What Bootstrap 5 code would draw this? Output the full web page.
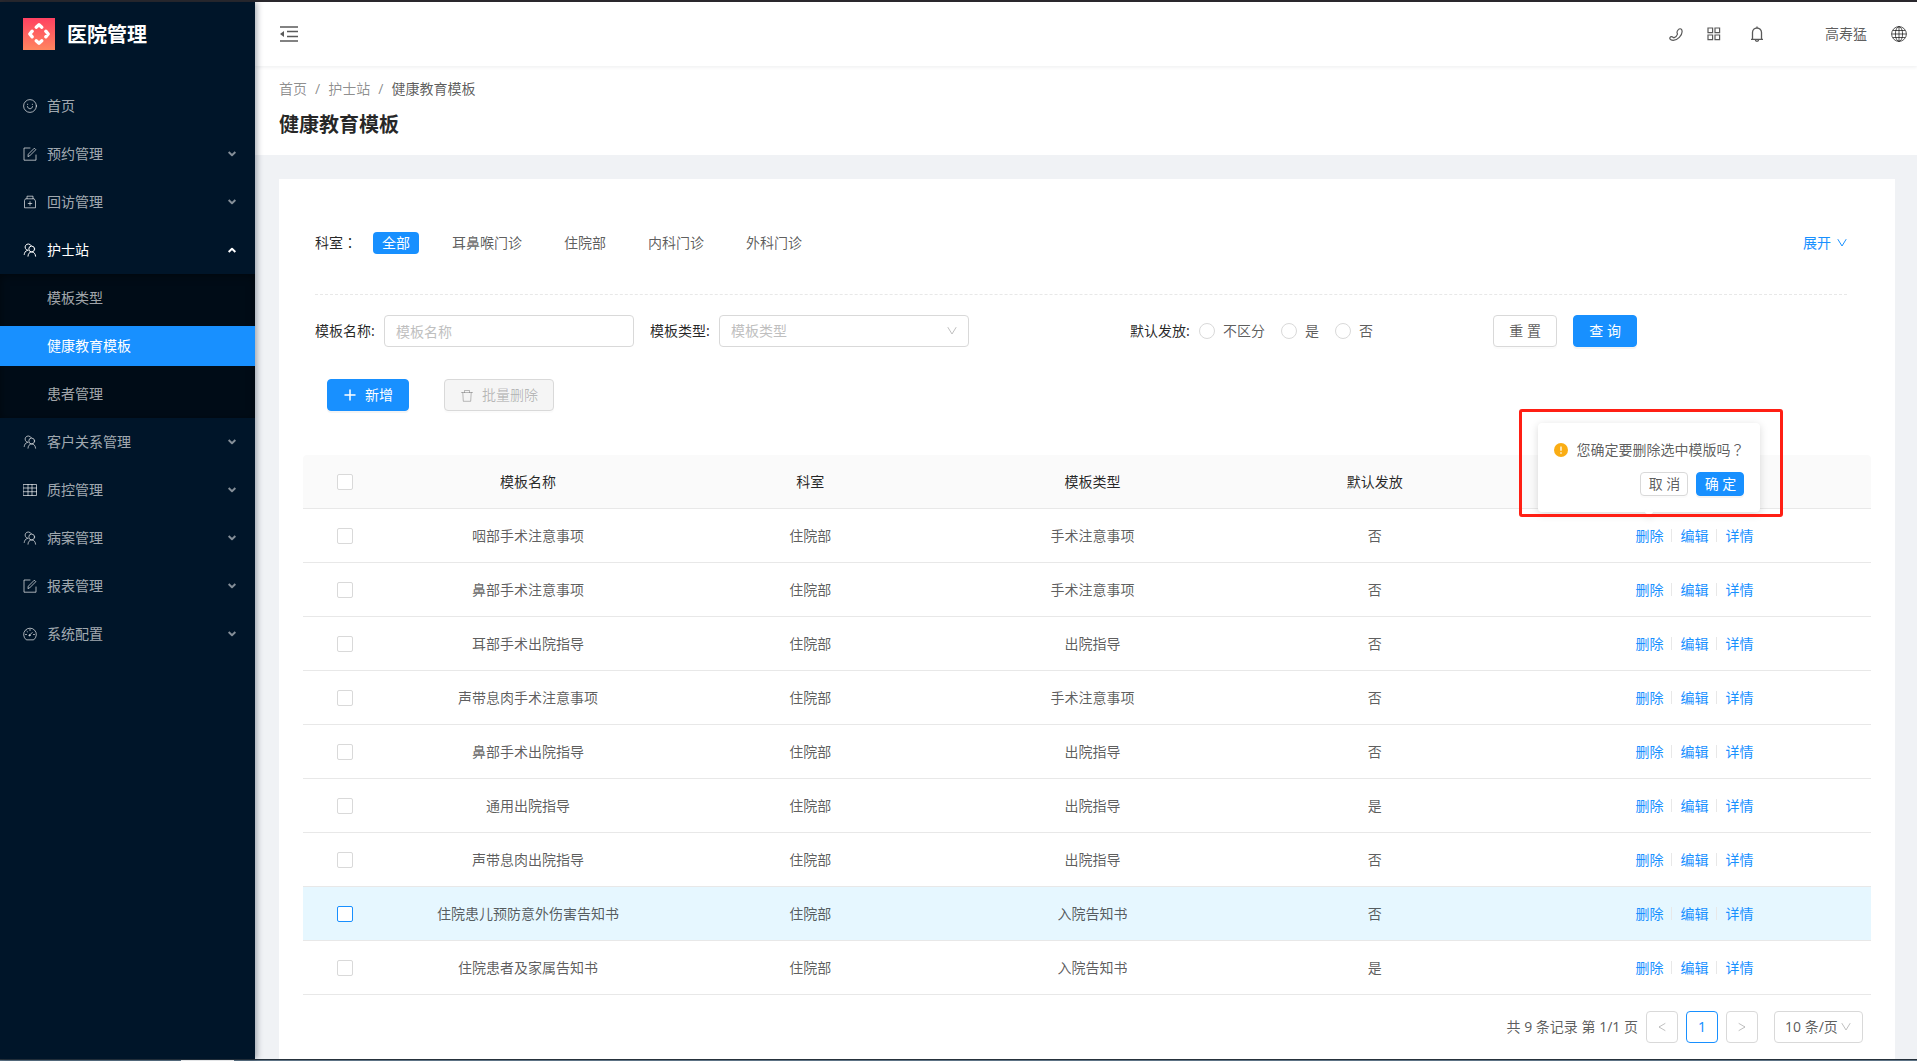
<!DOCTYPE html>
<html lang="zh-CN">
<head>
<meta charset="utf-8">
<meta name="viewport" content="width=device-width, initial-scale=1">
<title>健康教育模板 - 医院管理</title>
<link href="https://cdn.jsdelivr.net/npm/bootstrap@5.3.0/dist/css/bootstrap.min.css" rel="stylesheet">
<style>
:root{--blue:#1890ff;--navy:#001529;--line:#e8e8e8;--edge:#d9d9d9;--ink:rgba(0,0,0,.85);--txt:rgba(0,0,0,.65);--muted:rgba(0,0,0,.45)}
body{font-family:"Noto Sans","Noto Sans CJK SC",sans-serif;font-size:14px;line-height:22px;color:var(--txt);background:#f0f2f5}
a{color:inherit;text-decoration:none}
svg{display:block;flex:none}
.ico{width:14px;height:14px;fill:none;stroke:currentColor;stroke-width:1;stroke-linecap:round;stroke-linejoin:round}
.ico.small-ico{width:10px;height:10px}
.mid-punct{font-family:"Noto Sans CJK TC",sans-serif;font-feature-settings:"locl" 0;line-height:1}
.top-strip{height:2px;background:#2b292e}
.bottom-strip{height:2px;background:linear-gradient(90deg,#5d7385 0 181px,#fff 181px 234px,#5d7385 234px);border-top:1px solid #26313b}
.side{width:255px;background:var(--navy);box-shadow:2px 0 6px rgba(0,21,41,.35);z-index:5;color:rgba(255,255,255,.65)}
.brand{height:64px;padding-left:23px;gap:12px;color:#fff}
.brand h1{font-size:20px;line-height:32px;font-weight:700;margin:0;padding-top:2px}
.side li{display:flow-root}
.menu-link{height:40px;margin:4px 0;padding:0 19px 0 23px;gap:10px}
.menu-link:hover,.menu-link.open{color:#fff}
.menu-link .caret{width:8px;height:6px;margin-left:auto;stroke-width:2;stroke-linecap:butt}
.menu-link:not(.open) .caret{opacity:.8}
.submenu{background:#000c17;box-shadow:inset 0 2px 8px rgba(0,0,0,.45)}
.submenu .menu-link{padding-left:47px}
.submenu .menu-link.active{background:var(--blue);color:#fff}
.main-col{min-width:0}
.app-head{height:64px;background:#fff;box-shadow:0 1px 4px rgba(0,21,41,.08);padding:0 10px 0 25px;z-index:2}
.head-btn{padding:0;border:0;background:none;color:var(--txt)}
.head-tools{gap:24px}
.user-name{margin-left:36px}
.page-head{background:#fff;padding:12px 24px 14px}
.page-head .breadcrumb{margin:0 0 9px;--bs-breadcrumb-divider-color:var(--muted);--bs-breadcrumb-item-active-color:var(--txt);color:var(--muted)}
.page-head h2{font-size:20px;line-height:32px;font-weight:700;color:var(--ink);margin:0}
.panel{background:#fff;margin:24px 22px 0 24px;padding:48px 24px 16px}
.filters{margin:0 24px 0 12px}
.caption{color:var(--ink);white-space:nowrap}
.dept-row{padding:5px 0 40px;border-bottom:1px dashed var(--line)}
.dept-row .caption{margin-right:16px}
.tag{line-height:20px;padding:0 8px;border:1px solid transparent;border-radius:4px;background:none;color:var(--txt)}
.tag.on{background:var(--blue);color:#fff}
.tag-list{gap:24px}
.more{color:var(--blue);gap:6px}
.query-row{padding-top:20px}
.query-row .caption{width:69px}
.q-text{width:53.2%;gap:16px}
.q-send{width:23.7%}
.choice{gap:8px;margin-right:16px}
.field{width:250px;height:32px;font-size:14px;line-height:22px;padding:4px 11px;border:1px solid var(--edge);border-radius:4px;color:var(--txt);background-color:#fff}
.field::placeholder{color:#bfbfbf;opacity:1}
select.field{color:#bfbfbf;appearance:none}
.pick{position:relative}
.pick svg{position:absolute;right:12px;top:11px;color:#bfbfbf;pointer-events:none}
.round{appearance:none;width:16px;height:16px;border:1px solid var(--edge);border-radius:50%;margin:0;background:#fff}
.round:checked{border:5px solid var(--blue)}
.tick{appearance:none;display:block;width:16px;height:16px;border:1px solid var(--edge);border-radius:2px;background:#fff;margin:0 auto}
.tick:checked{background:var(--blue)}
.act{height:32px;font-size:14px;line-height:20px;padding:0 15px;border-radius:4px;--bs-btn-border-color:#d9d9d9;--bs-btn-color:rgba(0,0,0,.65);background:#fff;box-shadow:0 2px 0 rgba(0,0,0,.015)}
.act.main{background:var(--blue);border-color:var(--blue);color:#fff;box-shadow:0 2px 0 rgba(0,0,0,.045)}
.act:disabled{background:#f5f5f5;border-color:var(--edge);color:rgba(0,0,0,.25);opacity:1}
.act.wide{width:64px}
.act.mini{height:24px;width:48px;padding:0}
.tools{gap:35px;margin:32px 0 44px 24px}
.grid-table{margin:0;table-layout:fixed;border-collapse:separate;border-spacing:0;text-align:center;--bs-table-bg:transparent;--bs-table-color:rgba(0,0,0,.65)}
.grid-table>:not(caption)>*>*{height:54px;padding:0 16px;border-bottom:1px solid var(--line);vertical-align:middle}
.grid-table>thead>tr>th{font-weight:400;color:var(--ink);background:#fafafa}
.grid-table th:first-child{border-top-left-radius:4px}
.grid-table th:last-child{border-top-right-radius:4px}
.grid-table>tbody>tr.lit>td{background:#e6f7ff}
.grid-table tr.lit .tick{border-color:var(--blue)}
.c-check{width:84px}.c-data{width:18%}
.ops{gap:8px;padding-left:2px;color:var(--blue)}
.ops .bar{width:1px;height:13px;background:var(--line)}
.anchor{position:relative}
.confirm{position:absolute;left:50%;bottom:calc(100% + 13px);width:222px;transform:translateX(-50%);padding:16px;background:#fff;border-radius:4px;box-shadow:0 2px 8px rgba(0,0,0,.15);color:var(--txt);z-index:3}
.confirm::after{content:"";position:absolute;left:50%;bottom:-3px;width:6px;height:6px;margin-left:-3px;background:#fff;transform:rotate(45deg);box-shadow:3px 3px 7px rgba(0,0,0,.07)}
.marker{position:absolute;inset:-14px -23px -5px -19px;border:3px solid #ff1f14;border-radius:3px;pointer-events:none;z-index:1}
.confirm .ask{gap:8px;margin-bottom:11px;white-space:nowrap}
.pager{gap:8px;margin:16px 8px 0 0}
.page-btn{width:32px;height:32px;border:1px solid var(--edge);border-radius:4px;background:#fff;padding:0;color:rgba(0,0,0,.25)}
.page-btn svg{margin:auto}
.page-btn.current{border-color:var(--blue);color:var(--blue)}
.size-pick{margin-left:8px}
.size-pick .field{width:89px;padding:4px 10px;color:var(--txt)}
</style>
<script src="https://cdn.jsdelivr.net/npm/bootstrap@5.3.0/dist/js/bootstrap.bundle.min.js"></script>
</head>
<body class="d-flex flex-column min-vh-100">
<svg width="0" height="0" class="position-absolute" aria-hidden="true">
<defs>
<symbol id="i-smile" viewBox="0 0 14 14"><circle cx="7" cy="7" r="6.400"/><path d="M4.600 5.200v.3M9.400 5.200v.3M4.500 7.600c.3 1.400 1.200 2.100 2.500 2.100s2.200-.7 2.500-2.100"/></symbol>
<symbol id="i-form" viewBox="0 0 14 14"><path d="M7 1H1v12.200h12V8M5 9.200l.3-2L11.300 1.200l1.500 1.500-6 6z"/></symbol>
<symbol id="i-med" viewBox="0 0 14 14"><path d="M4 3.500V1.200h6v2.300M2.800 3.800h8.400l1.300 2.200v6.800h-11V6zM7 6.700v3.600M5.200 8.500h3.600"/></symbol>
<symbol id="i-team" viewBox="0 0 14 14"><path d="M5 7.500A3.300 3.300 0 1 1 8.300 2.700M4.300 7.300C2.400 8 1.400 9.700 1.200 11.500M5 13.200c.1-2.400 1.400-4.200 3.700-4.200s3.700 1.800 3.900 4.200"/><circle cx="8.700" cy="6" r="2.900"/></symbol>
<symbol id="i-table" viewBox="0 0 14 14"><path d="M.5 1.500h13v11H.5zM.5 5h13M.5 8.700h13M5 1.500v11M9 1.500v11"/></symbol>
<symbol id="i-dash" viewBox="0 0 14 14"><path d="M3 12.600a6.400 6.400 0 1 1 8 0zM6.500 8.200l2.700-2.700M7 2.500v1M2.500 7.500h1M10.500 7.500h1M3.900 4.200l.6.6"/><circle cx="6.500" cy="8.300" r=".6"/></symbol>
<symbol id="i-down" viewBox="0 0 10 10"><path d="M1 1.500 5 8l4-6.500"/></symbol>
<symbol id="i-left" viewBox="0 0 10 10"><path d="M8 1.500 2 5l6 3.500"/></symbol>
<symbol id="i-right" viewBox="0 0 10 10"><path d="M2 1.500 8 5 2 8.500"/></symbol>
<symbol id="i-caret" viewBox="0 0 8 6"><path d="M.6 1 4 4.200 7.400 1"/></symbol>
<symbol id="i-caret-up" viewBox="0 0 8 6"><path d="M.6 5 4 1.800 7.400 5"/></symbol>
<symbol id="i-plus" viewBox="0 0 14 14"><path d="M7 2v10M2 7h10" stroke-width="1.500"/></symbol>
<symbol id="i-trash" viewBox="0 0 14 14"><path d="M1.500 4.500h11M4.500 4.300V2.500h5v1.800M2.800 4.700l.5 8.600h7.400l.5-8.600"/></symbol>
</defs>
</svg>
<div class="top-strip"></div>
<div class="d-flex flex-grow-1">
<aside class="side flex-shrink-0">
  <a href="#" class="brand d-flex align-items-center">
    <svg width="32" height="32" viewBox="0 0 32 32" aria-hidden="true"><defs><linearGradient id="lg" x1="0" y1="0" x2="0" y2="1"><stop stop-color="#ff4161"/><stop offset="1" stop-color="#ff865f"/></linearGradient></defs><path fill="url(#lg)" d="M0 0h32v32H0z"/><path d="M13.200 9.200 16 6.800l2.800 2.400M13.200 22.800l2.800 2.400 2.800-2.400M9.200 13.200 6.800 16l2.400 2.800M22.800 13.200l2.400 2.800-2.400 2.800" fill="none" stroke="#fff" stroke-width="3.400" stroke-linecap="round" stroke-linejoin="round"/></svg>
    <h1>医院管理</h1>
  </a>
  <nav class="pt-3" aria-label="主菜单">
  <ul class="list-unstyled m-0">
    <li><a href="#" class="menu-link d-flex align-items-center"><svg class="ico"><use href="#i-smile"/></svg>首页</a></li>
    <li><a href="#" class="menu-link d-flex align-items-center"><svg class="ico"><use href="#i-form"/></svg>预约管理<svg class="ico caret"><use href="#i-caret"/></svg></a></li>
    <li><a href="#" class="menu-link d-flex align-items-center"><svg class="ico"><use href="#i-med"/></svg>回访管理<svg class="ico caret"><use href="#i-caret"/></svg></a></li>
    <li><a href="#" class="menu-link open d-flex align-items-center"><svg class="ico"><use href="#i-team"/></svg>护士站<svg class="ico caret"><use href="#i-caret-up"/></svg></a>
      <ul class="submenu list-unstyled">
        <li><a href="#" class="menu-link d-flex align-items-center">模板类型</a></li>
        <li><a href="#" class="menu-link active d-flex align-items-center" aria-current="page">健康教育模板</a></li>
        <li><a href="#" class="menu-link d-flex align-items-center">患者管理</a></li>
      </ul></li>
    <li><a href="#" class="menu-link d-flex align-items-center"><svg class="ico"><use href="#i-team"/></svg>客户关系管理<svg class="ico caret"><use href="#i-caret"/></svg></a></li>
    <li><a href="#" class="menu-link d-flex align-items-center"><svg class="ico"><use href="#i-table"/></svg>质控管理<svg class="ico caret"><use href="#i-caret"/></svg></a></li>
    <li><a href="#" class="menu-link d-flex align-items-center"><svg class="ico"><use href="#i-team"/></svg>病案管理<svg class="ico caret"><use href="#i-caret"/></svg></a></li>
    <li><a href="#" class="menu-link d-flex align-items-center"><svg class="ico"><use href="#i-form"/></svg>报表管理<svg class="ico caret"><use href="#i-caret"/></svg></a></li>
    <li><a href="#" class="menu-link d-flex align-items-center"><svg class="ico"><use href="#i-dash"/></svg>系统配置<svg class="ico caret"><use href="#i-caret"/></svg></a></li>
  </ul>
  </nav>
</aside>
<div class="main-col flex-grow-1">
  <header class="app-head position-relative d-flex align-items-center justify-content-between">
    <button class="head-btn" aria-label="收起菜单"><svg width="18" height="18" viewBox="0 0 18 18" fill="none" stroke="currentColor" stroke-width="1.600"><path d="M0 2h18M7 6.500h11M7 11.500h11M0 16h18"/><path d="M0 9l4-3v6z" fill="currentColor" stroke="none"/></svg></button>
    <div class="head-tools d-flex align-items-center">
      <button class="head-btn" aria-label="电话"><svg width="14" height="14" viewBox="0 0 14 14" fill="none" stroke="currentColor" stroke-width="1.200" stroke-linejoin="round"><path d="M9.600 2.400c.9-1 2.300-.8 3 .2 1 2.200 0 5.400-2.300 7.700s-5 3.400-7.400 2.900c-1.500-.3-2.500-1.700-1.900-2.700.7-1 2-1.100 3-.3l.8.700c1.700-.5 3.200-2 3.700-3.700l-.4-1.400c-.4-1.200.7-2.600 1.500-3.400z"/></svg></button>
      <button class="head-btn" aria-label="应用"><svg width="14" height="14" viewBox="0 0 14 14" fill="none" stroke="currentColor" stroke-width="1.200"><path d="M1 1h4.600v4.600H1zM8 1h4.600v4.600H8zM1 8h4.600v4.600H1zM8 8h4.600v4.600H8z"/></svg></button>
      <button class="head-btn ms-1" aria-label="通知"><svg width="16" height="16" viewBox="0 0 16 16" fill="none" stroke="currentColor" stroke-width="1.300"><path d="M2 13.400h12M3.500 13.400V6.500a4.500 4.500 0 0 1 9 0v6.900M8 .5V2M6.300 13.600a1.700 1.700 0 0 0 3.400 0"/></svg></button>
      <a href="#" class="user-name">高寿猛</a>
      <button class="head-btn" aria-label="语言"><svg width="16" height="16" viewBox="0 0 16 16" fill="none" stroke="currentColor"><circle cx="8" cy="8" r="7.400"/><ellipse cx="8" cy="8" rx="3.600" ry="7.300"/><path d="M8 .7v14.600M.7 8h14.600M2 4.500h12M2 11.500h12"/></svg></button>
    </div>
  </header>
  <section class="page-head">
    <nav aria-label="breadcrumb"><ol class="breadcrumb">
      <li class="breadcrumb-item"><a href="#">首页</a></li><li class="breadcrumb-item"><a href="#">护士站</a></li><li class="breadcrumb-item active" aria-current="page">健康教育模板</li>
    </ol></nav>
    <h2>健康教育模板</h2>
  </section>
  <main class="panel">
    <div class="filters">
      <div class="dept-row d-flex align-items-center">
        <span class="caption">科室<span class="mid-punct">：</span></span>
        <div class="tag-list d-flex flex-grow-1">
          <button class="tag on">全部</button><button class="tag">耳鼻喉门诊</button><button class="tag">住院部</button><button class="tag">内科门诊</button><button class="tag">外科门诊</button>
        </div>
        <a href="#" class="more d-flex align-items-center">展开<svg class="ico small-ico"><use href="#i-down"/></svg></a>
      </div>
      <form class="query-row d-flex align-items-center">
        <div class="q-text d-flex">
          <div class="d-flex align-items-center"><label class="caption" for="tname">模板名称:</label><input id="tname" class="field" placeholder="模板名称"></div>
          <div class="d-flex align-items-center"><label class="caption" for="ttype">模板类型:</label><div class="pick"><select id="ttype" class="field"><option>模板类型</option></select><svg class="ico small-ico"><use href="#i-down"/></svg></div></div>
        </div>
        <div class="q-send d-flex align-items-center" role="radiogroup" aria-labelledby="sendcap"><span class="caption" id="sendcap">默认发放:</span>
          <label class="choice d-flex align-items-center"><input type="radio" name="send" class="round">不区分</label><label class="choice d-flex align-items-center"><input type="radio" name="send" class="round">是</label><label class="choice d-flex align-items-center"><input type="radio" name="send" class="round">否</label></div>
        <div class="d-flex gap-3"><button type="reset" class="btn act wide">重 置</button><button type="button" class="btn act main wide">查 询</button></div>
      </form>
    </div>
    <div class="tools d-flex">
      <button class="btn act main d-flex align-items-center gap-2"><svg class="ico"><use href="#i-plus"/></svg>新增</button>
      <button class="btn act d-flex align-items-center gap-2" disabled><svg class="ico"><use href="#i-trash"/></svg>批量删除</button>
    </div>
    <table class="table grid-table">
      <thead><tr><th class="c-check"><input type="checkbox" class="tick" aria-label="全选"></th><th class="c-data">模板名称</th><th class="c-data">科室</th><th class="c-data">模板类型</th><th class="c-data">默认发放</th><th aria-label="操作"></th></tr></thead>
      <tbody>
        <tr><td><input type="checkbox" class="tick" aria-label="选择"></td><td>咽部手术注意事项</td><td>住院部</td><td>手术注意事项</td><td>否</td><td><div class="ops d-flex justify-content-center align-items-center"><div class="anchor"><a href="#">删除</a>
          <div class="confirm" role="dialog" aria-label="删除确认">
            <div class="ask d-flex align-items-center"><svg width="14" height="14" viewBox="0 0 14 14" aria-hidden="true"><circle cx="7" cy="7" r="7" fill="#faad14"/><path d="M7 3.500v4.300M7 9.300v1.400" stroke="#fff" stroke-width="1.300"/></svg><span>您确定要删除选中模版吗<span class="mid-punct">？</span></span></div>
            <div class="d-flex justify-content-end gap-2"><button class="btn act mini">取 消</button><button class="btn act main mini">确 定</button></div>
            <div class="marker"></div>
          </div></div><span class="bar"></span><a href="#">编辑</a><span class="bar"></span><a href="#">详情</a></div></td></tr>
        <tr><td><input type="checkbox" class="tick" aria-label="选择"></td><td>鼻部手术注意事项</td><td>住院部</td><td>手术注意事项</td><td>否</td><td><div class="ops d-flex justify-content-center align-items-center"><a href="#">删除</a><span class="bar"></span><a href="#">编辑</a><span class="bar"></span><a href="#">详情</a></div></td></tr>
        <tr><td><input type="checkbox" class="tick" aria-label="选择"></td><td>耳部手术出院指导</td><td>住院部</td><td>出院指导</td><td>否</td><td><div class="ops d-flex justify-content-center align-items-center"><a href="#">删除</a><span class="bar"></span><a href="#">编辑</a><span class="bar"></span><a href="#">详情</a></div></td></tr>
        <tr><td><input type="checkbox" class="tick" aria-label="选择"></td><td>声带息肉手术注意事项</td><td>住院部</td><td>手术注意事项</td><td>否</td><td><div class="ops d-flex justify-content-center align-items-center"><a href="#">删除</a><span class="bar"></span><a href="#">编辑</a><span class="bar"></span><a href="#">详情</a></div></td></tr>
        <tr><td><input type="checkbox" class="tick" aria-label="选择"></td><td>鼻部手术出院指导</td><td>住院部</td><td>出院指导</td><td>否</td><td><div class="ops d-flex justify-content-center align-items-center"><a href="#">删除</a><span class="bar"></span><a href="#">编辑</a><span class="bar"></span><a href="#">详情</a></div></td></tr>
        <tr><td><input type="checkbox" class="tick" aria-label="选择"></td><td>通用出院指导</td><td>住院部</td><td>出院指导</td><td>是</td><td><div class="ops d-flex justify-content-center align-items-center"><a href="#">删除</a><span class="bar"></span><a href="#">编辑</a><span class="bar"></span><a href="#">详情</a></div></td></tr>
        <tr><td><input type="checkbox" class="tick" aria-label="选择"></td><td>声带息肉出院指导</td><td>住院部</td><td>出院指导</td><td>否</td><td><div class="ops d-flex justify-content-center align-items-center"><a href="#">删除</a><span class="bar"></span><a href="#">编辑</a><span class="bar"></span><a href="#">详情</a></div></td></tr>
        <tr class="lit"><td><input type="checkbox" class="tick" aria-label="选择"></td><td>住院患儿预防意外伤害告知书</td><td>住院部</td><td>入院告知书</td><td>否</td><td><div class="ops d-flex justify-content-center align-items-center"><a href="#">删除</a><span class="bar"></span><a href="#">编辑</a><span class="bar"></span><a href="#">详情</a></div></td></tr>
        <tr><td><input type="checkbox" class="tick" aria-label="选择"></td><td>住院患者及家属告知书</td><td>住院部</td><td>入院告知书</td><td>是</td><td><div class="ops d-flex justify-content-center align-items-center"><a href="#">删除</a><span class="bar"></span><a href="#">编辑</a><span class="bar"></span><a href="#">详情</a></div></td></tr>
      </tbody>
    </table>
    <div class="pager d-flex justify-content-end align-items-center">
      <span>共 9 条记录 第 1/1 页</span>
      <button class="page-btn" aria-label="上一页"><svg class="ico small-ico"><use href="#i-left"/></svg></button>
      <button class="page-btn current">1</button>
      <button class="page-btn" aria-label="下一页"><svg class="ico small-ico"><use href="#i-right"/></svg></button>
      <div class="pick size-pick"><select class="field" aria-label="每页条数"><option>10 条/页</option></select><svg class="ico small-ico"><use href="#i-down"/></svg></div>
    </div>
  </main>
</div>
</div>
<div class="bottom-strip"></div>
</body>
</html>
